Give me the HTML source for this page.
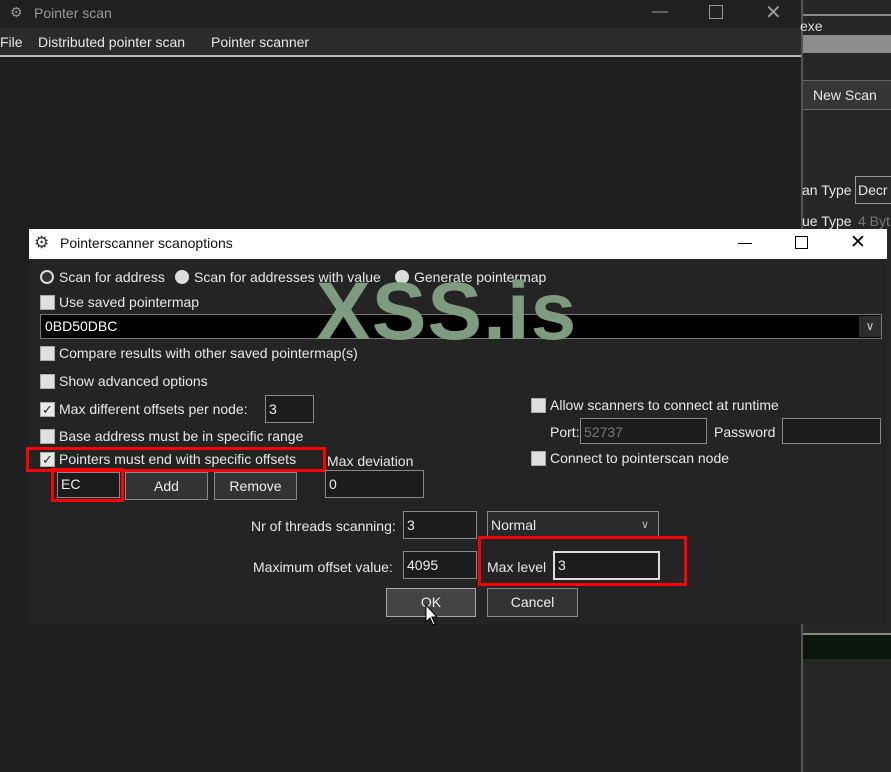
<!DOCTYPE html>
<html><head><style>
body{margin:0;width:891px;height:772px;background:#1f1f1f;position:relative;overflow:hidden;font-family:"Liberation Sans",sans-serif;font-size:14px;color:#e8e8e8}
.a{position:absolute;white-space:nowrap}
.cb{position:absolute;width:13px;height:13px;background:#e0e0e0;border:1px solid #aaa}
.ck{position:absolute;width:13px;height:13px;background:#e8e8e8;border:1px solid #aaa;color:#222;font-size:13px;line-height:13px;text-align:center}
.inp{position:absolute;background:#1c1c1c;border:1px solid #8a8a8a;box-sizing:border-box;padding-left:3px;line-height:26px;color:#eee}
.btn{position:absolute;background:#333;border:1px solid #888;box-sizing:border-box;text-align:center;color:#eee}
.red{position:absolute;border:3px solid #f00;box-sizing:border-box}
</style></head><body>
<div class="a" style="left:0;top:0;width:801px;height:28px;background:#202020"></div>
<div class="a" style="left:10px;top:4px;font-size:14px;color:#999">&#x2699;</div>
<div class="a" style="left:34px;top:5px;color:#9a9a9a">Pointer scan</div>
<div class="a" style="left:652px;top:3px;color:#999;font-size:16px">&#x2014;</div>
<div class="a" style="left:709px;top:5px;width:12px;height:12px;border:1px solid #999"></div>
<div class="a" style="left:765px;top:0px;color:#999;font-size:20px">&#x2715;</div>
<div class="a" style="left:0;top:28px;width:801px;height:27px;background:#2b2b2b"></div>
<div class="a" style="left:0;top:34px">File</div>
<div class="a" style="left:38px;top:34px">Distributed pointer scan</div>
<div class="a" style="left:211px;top:34px">Pointer scanner</div>
<div class="a" style="left:0;top:55px;width:801px;height:2px;background:#bbb"></div>
<div class="a" style="left:801px;top:0;width:2px;height:772px;background:#555"></div>
<div class="a" style="left:803px;top:0;width:88px;height:772px;background:#262626"></div>
<div class="a" style="left:803px;top:14px;width:88px;height:2px;background:#888"></div>
<div class="a" style="left:800px;top:18px;color:#ddd">exe</div>
<div class="a" style="left:803px;top:35px;width:88px;height:18px;background:#8c8c8c"></div>
<div class="a" style="left:803px;top:80px;width:88px;height:28px;background:#363636;border-top:1px solid #666;border-bottom:1px solid #666"></div>
<div class="a" style="left:813px;top:87px">New Scan</div>
<div class="a" style="left:802px;top:182px">an Type</div>
<div class="a" style="left:855px;top:176px;width:40px;height:28px;border:1px solid #999;box-sizing:border-box;background:#2a2a2a"></div>
<div class="a" style="left:858px;top:182px">Decr</div>
<div class="a" style="left:802px;top:213px">ue Type</div>
<div class="a" style="left:858px;top:213px;color:#777">4 Byt</div>
<div class="a" style="left:803px;top:633px;width:88px;height:24px;background:#0c160c;border-top:2px solid #888"></div>
<div class="a" style="left:29px;top:229px;width:858px;height:30px;background:#fff"></div>
<div class="a" style="left:34px;top:233px;color:#333;font-size:17px">&#x2699;</div>
<div class="a" style="left:60px;top:235px;color:#111">Pointerscanner scanoptions</div>
<div class="a" style="left:738px;top:243px;width:14px;height:1px;background:#000"></div>
<div class="a" style="left:795px;top:236px;width:11px;height:11px;border:1px solid #000"></div>
<div class="a" style="left:850px;top:231px;color:#000;font-size:19px">&#x2715;</div>
<div class="a" style="left:29px;top:259px;width:858px;height:365px;background:#242424"></div>

<div class="a" style="left:40px;top:270px;width:10px;height:10px;border-radius:50%;border:2px solid #ddd;background:#333"></div>
<div class="a" style="left:59px;top:269px">Scan for address</div>
<div class="a" style="left:175px;top:270px;width:14px;height:14px;border-radius:50%;background:#ddd"></div>
<div class="a" style="left:194px;top:269px">Scan for addresses with value</div>
<div class="a" style="left:395px;top:270px;width:14px;height:14px;border-radius:50%;background:#ddd"></div>
<div class="a" style="left:414px;top:269px">Generate pointermap</div>
<div class="cb" style="left:40px;top:295px"></div><div class="a" style="left:59px;top:294px">Use saved pointermap</div>
<div class="a" style="left:40px;top:314px;width:842px;height:25px;background:#000;border:1px solid #777;box-sizing:border-box"></div>
<div class="a" style="left:45px;top:318px;color:#fff">0BD50DBC</div>
<div class="a" style="left:859px;top:316px;width:22px;height:21px;background:#2d2d2d;color:#ccc;text-align:center;font-size:12px;line-height:21px">&#x2228;</div>
<div class="cb" style="left:40px;top:346px"></div><div class="a" style="left:59px;top:345px">Compare results with other saved pointermap(s)</div>
<div class="cb" style="left:40px;top:374px"></div><div class="a" style="left:59px;top:373px">Show advanced options</div>
<div class="ck" style="left:40px;top:402px">&#x2713;</div><div class="a" style="left:59px;top:401px">Max different offsets per node:</div>
<div class="inp" style="left:265px;top:395px;width:49px;height:28px">3</div>
<div class="cb" style="left:40px;top:429px"></div><div class="a" style="left:59px;top:428px">Base address must be in specific range</div>
<div class="ck" style="left:40px;top:452px">&#x2713;</div><div class="a" style="left:59px;top:451px">Pointers must end with specific offsets</div>
<div class="red" style="left:26px;top:447px;width:300px;height:25px"></div>
<div class="a" style="left:327px;top:453px">Max deviation</div>
<div class="inp" style="left:325px;top:470px;width:99px;height:28px">0</div>
<div class="inp" style="left:57px;top:472px;width:63px;height:26px;line-height:22px">EC</div>
<div class="red" style="left:51px;top:468px;width:73px;height:34px"></div>
<div class="btn" style="left:125px;top:472px;width:83px;height:28px;line-height:26px">Add</div>
<div class="btn" style="left:214px;top:472px;width:83px;height:28px;line-height:26px">Remove</div>

<div class="cb" style="left:531px;top:398px"></div><div class="a" style="left:550px;top:397px">Allow scanners to connect at runtime</div>
<div class="a" style="left:550px;top:424px">Port:</div>
<div class="inp" style="left:580px;top:418px;width:127px;height:26px;color:#777">52737</div>
<div class="a" style="left:714px;top:424px">Password</div>
<div class="inp" style="left:782px;top:418px;width:99px;height:26px"></div>
<div class="cb" style="left:531px;top:451px"></div><div class="a" style="left:550px;top:450px">Connect to pointerscan node</div>

<div class="a" style="left:251px;top:518px">Nr of threads scanning:</div>
<div class="inp" style="left:403px;top:511px;width:74px;height:28px">3</div>
<div class="a" style="left:487px;top:511px;width:172px;height:28px;background:#2a2a2a;border:1px solid #888;box-sizing:border-box"></div>
<div class="a" style="left:491px;top:517px">Normal</div>
<div class="a" style="left:641px;top:518px;color:#bbb;font-size:11px">&#x2228;</div>
<div class="a" style="left:253px;top:559px">Maximum offset value:</div>
<div class="inp" style="left:403px;top:551px;width:74px;height:28px">4095</div>
<div class="red" style="left:478px;top:536px;width:209px;height:50px"></div>
<div class="a" style="left:487px;top:559px">Max level</div>
<div class="a" style="left:553px;top:551px;width:107px;height:29px;background:#1c1c1c;border:2px solid #ddd;box-sizing:border-box;padding-left:3px;line-height:25px">3</div>
<div class="btn" style="left:386px;top:588px;width:90px;height:29px;line-height:27px;background:#444;border-color:#aaa">OK</div>
<div class="btn" style="left:487px;top:588px;width:91px;height:29px;line-height:27px">Cancel</div>
<svg class="a" style="left:425px;top:604px" width="14" height="22" viewBox="0 0 14 22"><path d="M1 1 L1 18 L5 14 L8 21 L10 20 L7 13 L12 13 Z" fill="#fff" stroke="#000" stroke-width="1"/></svg>
<div class="a" style="left:316px;top:265px;font-size:82px;font-weight:bold;color:#7e9a7f;letter-spacing:1px;z-index:10">XSS.is</div>
</body></html>
